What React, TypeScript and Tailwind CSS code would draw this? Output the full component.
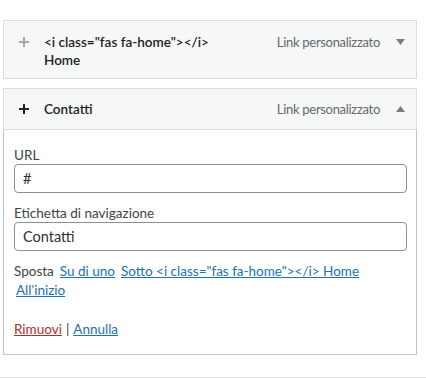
import { ReactNode } from "react";

const font = { fontFamily: 'Lato, "Noto Sans", sans-serif' };

function Plus({ dark }: { dark?: boolean }) {
  return (
    <svg width="10" height="10" viewBox="0 0 10 10" className="block">
      <rect x="0" y="4" width="10" height="2" fill={dark ? "#1d2327" : "#a7aaad"} />
      <rect x="4" y="0" width="2" height="10" fill={dark ? "#1d2327" : "#a7aaad"} />
    </svg>
  );
}

function Arrow({ up }: { up?: boolean }) {
  return (
    <svg width="9" height="6" viewBox="0 0 9 6" className="block">
      <polygon points={up ? "0,6 9,6 4.5,0" : "0,0 9,0 4.5,6"} fill="#787c82" />
    </svg>
  );
}

interface HandleProps {
  open?: boolean;
  children: ReactNode;
}

function Handle({ open, children }: HandleProps) {
  return (
    <div className="flex items-start pl-[10px] pr-[6px]">
      <div className="w-[20px] h-[18px] flex items-center justify-center">
        <Plus dark={open} />
      </div>
      <div className="ml-[10px] flex-1 text-[13.5px] leading-[18px] font-semibold text-[#1d2327]">
        {children}
      </div>
      <div className="text-[13px] tracking-[-0.3px] leading-[18px] text-[#646970]">Link personalizzato</div>
      <div className="w-[20px] h-[18px] ml-[10px] flex items-center justify-center">
        <Arrow up={open} />
      </div>
    </div>
  );
}

export default function App() {
  return (
    <div className="w-[426px] h-[378px] bg-white pt-[20px] overflow-hidden" style={font}>
      <div className="ml-[3px] w-[414px] border border-[#dcdcde] bg-[#f6f7f7] pt-[12px] pb-[9px]">
        <Handle>
          <div>{'<i class="fas fa-home"></i>'}</div>
          <div>Home</div>
        </Handle>
      </div>

      <div className="ml-[3px] w-[414px] mt-[9px]">
        <div className="border border-[#dcdcde] bg-[#f6f7f7] h-[42px] pt-[11px]">
          <Handle open>Contatti</Handle>
        </div>
        <div className="border border-t-0 border-[#c3c4c7] px-[10px] pt-[16px] pb-[16px] text-[13.5px] leading-[18px] text-[#3c434a]">
          <label className="block">URL</label>
          <div className="h-[29px] border border-[#8c8f94] rounded-[4px] bg-white px-[8px] flex items-center text-[14.5px] text-[#2c3338] mr-[-1px]">
            #
          </div>
          <label className="block mt-[11px]">Etichetta di navigazione</label>
          <div className="h-[29px] border border-[#8c8f94] rounded-[4px] bg-white px-[8px] flex items-center text-[14.5px] text-[#2c3338] mr-[-1px]">
            Contatti
          </div>
          <div className="mt-[11px] flex">
            <span>Sposta</span>
            <a href="#" className="ml-[6px] text-[#2271b1] underline">Su di uno</a>
            <a href="#" className="ml-[6px] text-[#2271b1] underline">
              {'Sotto <i class="fas fa-home"></i> Home'}
            </a>
          </div>
          <div className="pl-[2px] mt-px">
            <a href="#" className="text-[#2271b1] underline">All'inizio</a>
          </div>
          <div className="mt-[21px]">
            <a href="#" className="text-[#b32d2e] underline">Rimuovi</a>
            <span className="mx-[4px]">|</span>
            <a href="#" className="text-[#2271b1] underline">Annulla</a>
          </div>
        </div>
      </div>

      <div className="mt-[22px] h-px bg-[#dcdcde]" />
    </div>
  );
}
